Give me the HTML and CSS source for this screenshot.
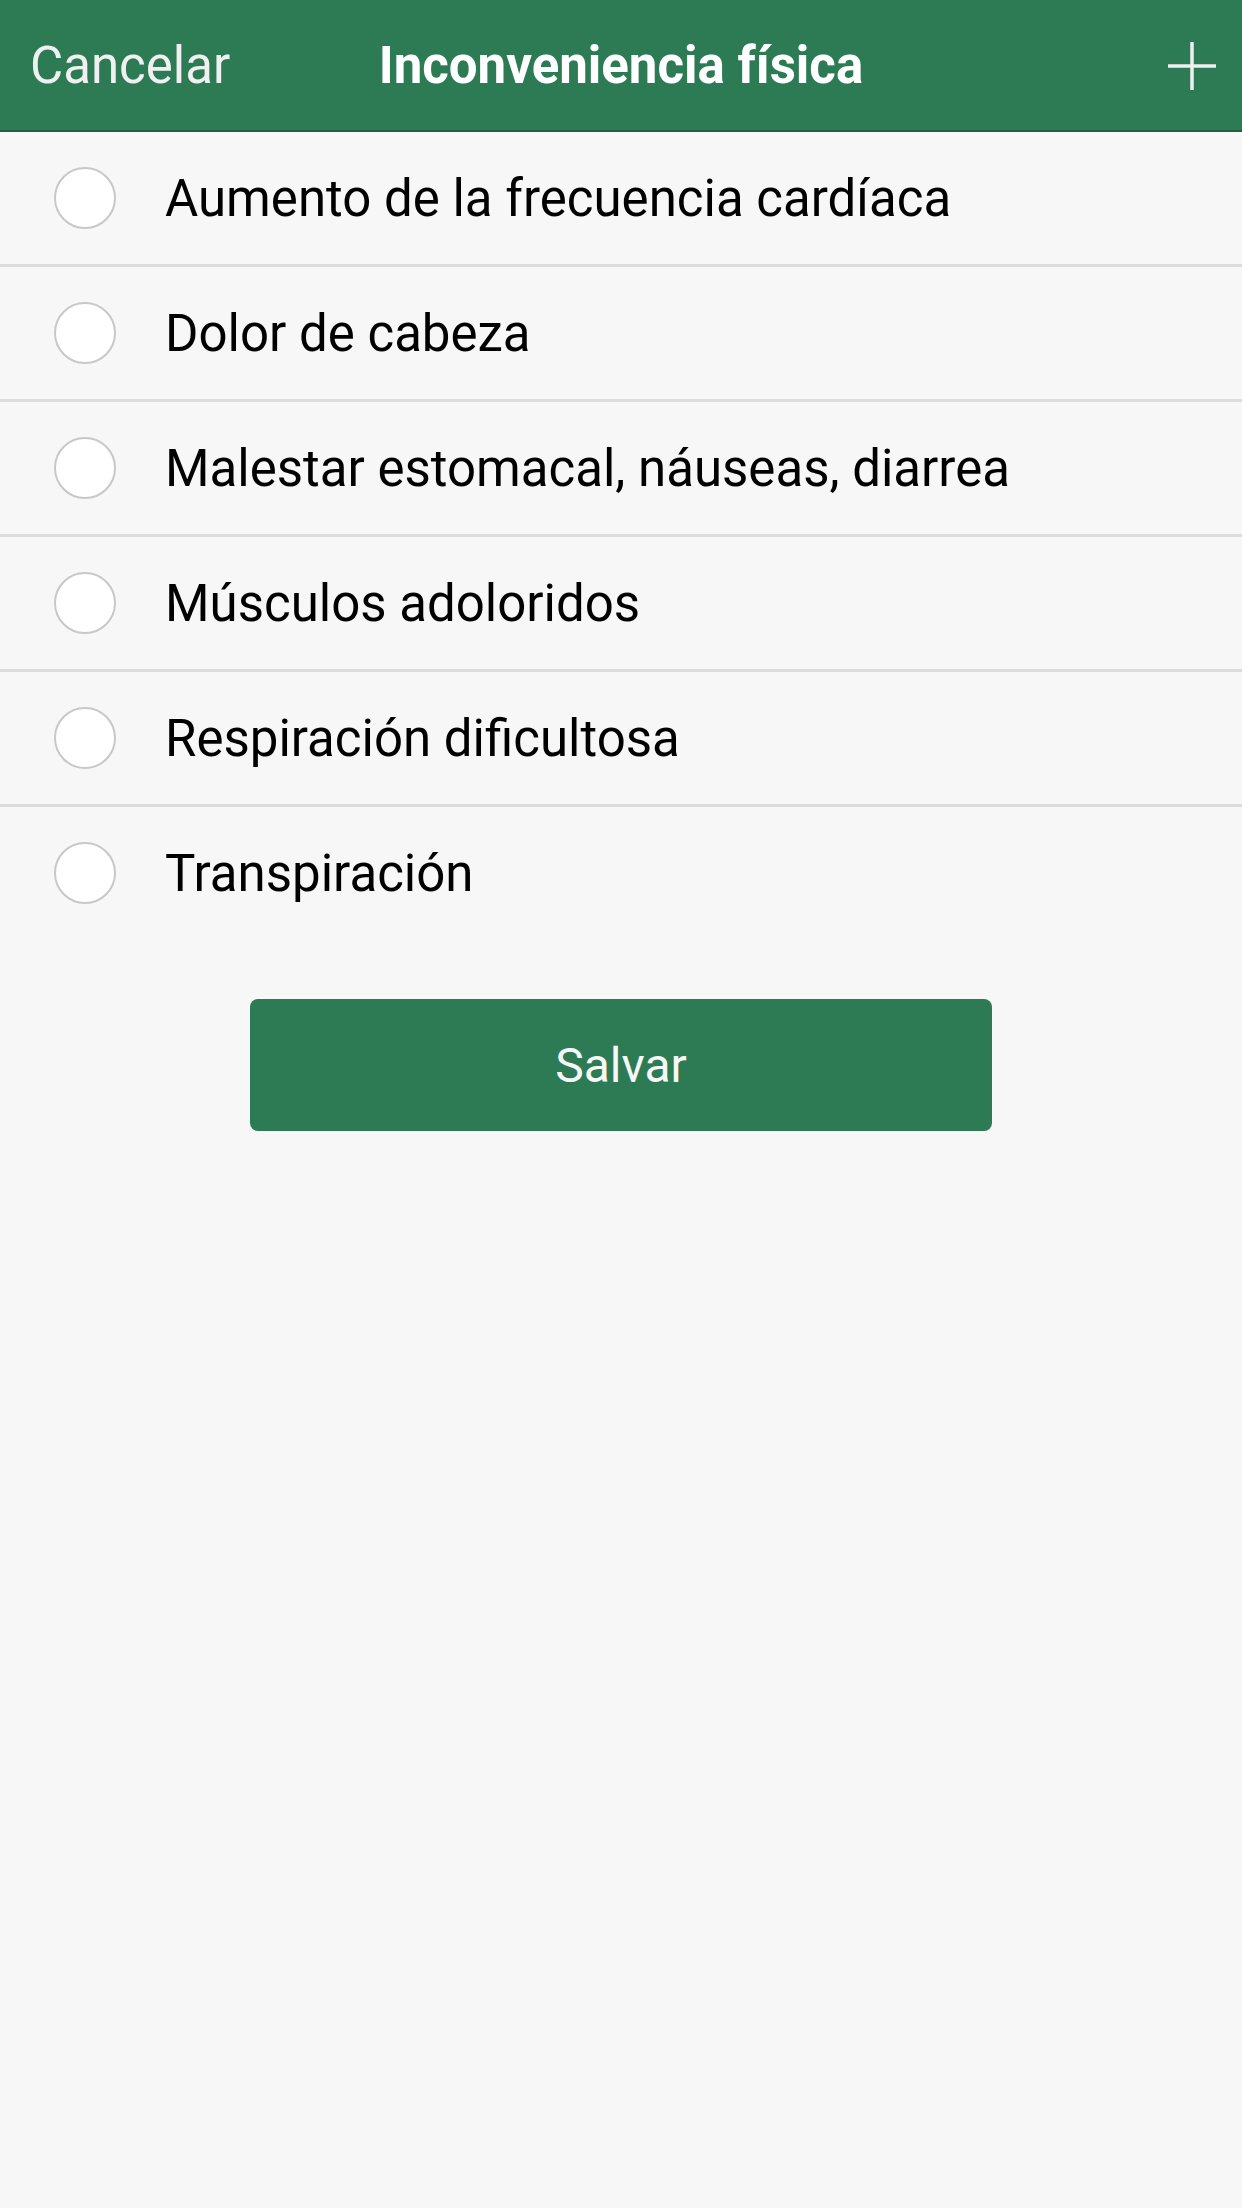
FILE: index.html
```html
<!DOCTYPE html>
<html lang="es">
<head>
  <meta charset="UTF-8">
  <link rel="stylesheet" href="styles.css">
</head>
<body>
  <div class="topbar">
    <span class="cancel">Cancelar</span>
    <span class="title">Inconveniencia física</span>
    <span class="add">
      <svg width="48" height="48" viewBox="0 0 48 48">
        <path d="M24 0 V48 M0 24 H48" stroke="#f0f0f0" stroke-width="3.5" fill="none"/>
      </svg>
    </span>
  </div>

  <ul class="options">
    <li class="option"><span class="radio"></span><span class="label">Aumento de la frecuencia cardíaca</span></li>
    <li class="option"><span class="radio"></span><span class="label">Dolor de cabeza</span></li>
    <li class="option"><span class="radio"></span><span class="label">Malestar estomacal, náuseas, diarrea</span></li>
    <li class="option"><span class="radio"></span><span class="label">Músculos adoloridos</span></li>
    <li class="option"><span class="radio"></span><span class="label">Respiración dificultosa</span></li>
    <li class="option"><span class="radio"></span><span class="label">Transpiración</span></li>
  </ul>

  <div class="actions">
    <button class="save">Salvar</button>
  </div>
</body>
</html>
```

FILE: styles.css
```css
html, body {
  margin: 0;
  width: 1242px;
  height: 2208px;
  background: #f7f7f7;
  font-family: Roboto, "Liberation Sans", sans-serif;
}

.topbar {
  height: 130px;
  background: #2d7b55;
  border-bottom: 2px solid #22603f;
  display: flex;
  align-items: center;
  padding: 0 26px 0 30px;
  position: relative;
}

.cancel {
  font-size: 51px;
  color: #f0f0f0;
}

.title {
  position: absolute;
  left: 0;
  right: 0;
  text-align: center;
  font-size: 51px;
  font-weight: bold;
  color: #fff;
  pointer-events: none;
}

.add {
  margin-left: auto;
  display: flex;
  margin-top: 2px;
}

.options {
  list-style: none;
  margin: 0;
  padding: 0;
}

.option {
  height: 132px;
  display: flex;
  align-items: center;
  border-bottom: 3px solid #dcdcdc;
}

.option:last-child {
  border-bottom: none;
}

.radio {
  width: 58px;
  height: 58px;
  border: 2px solid #c8c8c8;
  border-radius: 50%;
  background: #fff;
  margin-left: 54px;
  margin-right: 49px;
}

.label {
  font-size: 51px;
  color: #000;
  margin-top: 1px;
}

.actions {
  display: flex;
  justify-content: center;
  padding-top: 60px;
}

.save {
  width: 742px;
  height: 132px;
  background: #2d7b55;
  border: none;
  border-radius: 8px;
  color: #f7f7f7;
  font-family: Roboto, "Liberation Sans", sans-serif;
  font-size: 48px;
}
```
